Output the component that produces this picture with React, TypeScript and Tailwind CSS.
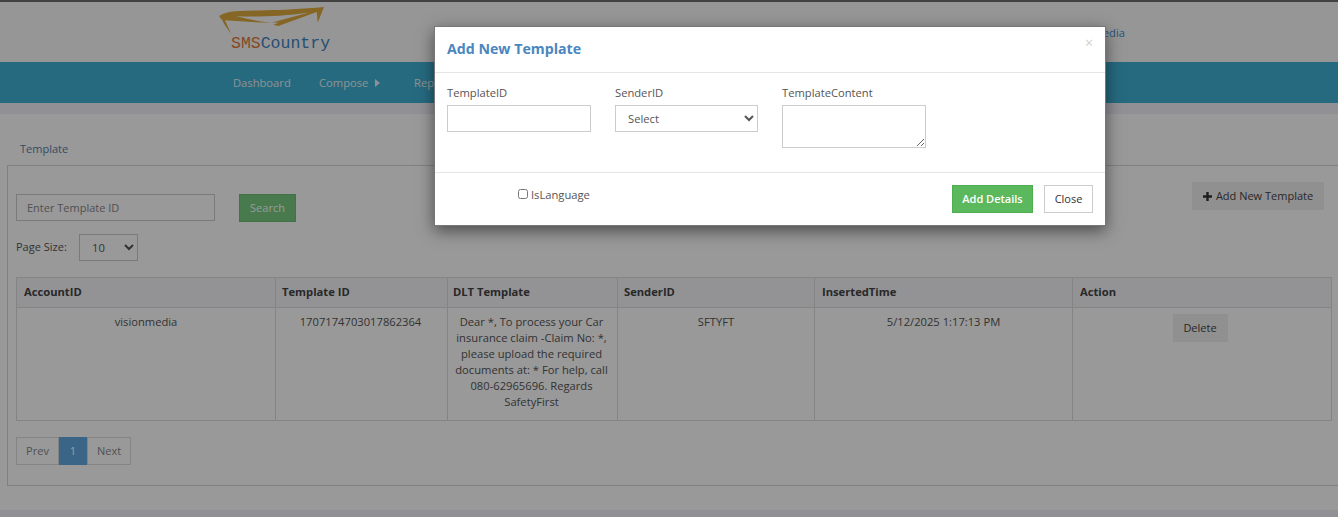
import React from "react";

const rows = [
  { w: "w-[259px]", p: "px-[7px]", c: "px-[6px]", h: "AccountID", v: "visionmedia" },
  { w: "w-[172px]", p: "px-[6px]", c: "pl-[5px] pr-[7px]", h: "Template ID", v: "1707174703017862364" },
  {
    w: "w-[170px]",
    p: "px-[5px]",
    c: "pl-[5px] pr-[7px]",
    h: "DLT Template",
    v: "Dear *, To process your Car insurance claim -Claim No: *, please upload the required documents at: * For help, call 080-62965696. Regards SafetyFirst",
  },
  { w: "w-[197px]", p: "px-[6px]", c: "px-[6px]", h: "SenderID", v: "SFTYFT" },
  { w: "w-[258px]", p: "px-[7px]", c: "px-[6px]", h: "InsertedTime", v: "5/12/2025 1:17:13 PM" },
];

function Logo() {
  return (
    <div className="relative w-[112px] h-[48px]">
      <svg className="absolute left-0 top-0" width="112" height="34" viewBox="0 0 112 34">
        <path
          d="M0 9 C5 6 10 5 16 4.3 C26 3.6 36 3.6 46 3.3 C56 3 64 3 72.7 2.3 C84 1.5 95 1 105 0 L98.7 15.7 L97.7 5 L59.3 19 L54.3 17.7 L60 15.5 C42 16 22 14.5 6 13.3 L12 26.7 C8 22 5 17 3.3 13.3 C2 12 1 10.5 0 9 Z M17 9 C30 10 60 10 90 5.5 L53 15.5 C40 14.5 28 12 17 9 Z"
          fill="#e0ab3c"
          fillRule="evenodd"
        />
      </svg>
      <div className="absolute left-[12px] top-[27px] whitespace-nowrap font-['Liberation_Mono',monospace] text-[16.5px] leading-[20px]">
        <span className="text-[#e07a3c]">SMS</span>
        <span className="text-[#3f83c0]">Country</span>
      </div>
    </div>
  );
}

function Page() {
  return (
    <div className="min-h-[517px] bg-white border-t-2 border-[#6e6e6e] text-[#555] flex flex-col">
      <header className="h-[60px] bg-[#fbfbfb] relative shrink-0 pl-[219px] pt-[5px]">
        <Logo />
        <div className="absolute right-[213px] top-[23px] text-[11.2px] text-[#428bca]">visionmedia</div>
      </header>
      <nav className="h-[41px] bg-[#40b1d5] flex items-center pl-[233px] pt-[2px] text-[11.2px] text-[#e9f3f7] shrink-0">
        <span className="w-[86px]">Dashboard</span>
        <span className="w-[95px] flex items-center">
          Compose
          <span className="ml-[7px] w-0 h-0 border-y-[4px] border-y-transparent border-l-[5px] border-l-[#e9f3f7]" />
        </span>
        <span>Reports</span>
      </nav>
      <div className="h-[11px] bg-[#f0f0f8] shrink-0" />
      <main className="pl-[7px] pt-[27px] flex-1">
        <div className="pl-[13px] text-[11px] leading-[16px] text-[#5a7ea6] h-[24px]">Template</div>
        <section className="border-y border-l border-[#d8d8d8] h-[321px] pl-[8px] pt-[16px]">
          <div className="flex items-start h-[40px] w-[1308px]">
            <input
              className="w-[199px] h-[27px] mt-[12px] border border-[#ccc] px-[10px] text-[11px] placeholder:text-[#888]"
              placeholder="Enter Template ID"
            />
            <button className="ml-[24px] mt-[12px] w-[57px] h-[28px] bg-[#78cc80] text-white text-[11px] border border-[#6cc074]">
              Search
            </button>
            <button className="ml-auto w-[132px] h-[28px] bg-[#f0f0f0] text-[11px] text-[#444] flex items-center justify-center gap-[4px]">
              <svg width="9" height="9" viewBox="0 0 9 9">
                <path d="M3.3 0h2.4v3.3H9v2.4H5.7V9H3.3V5.7H0V3.3h3.3z" fill="#333" />
              </svg>
              Add New Template
            </button>
          </div>
          <div className="flex items-center h-[27px] mt-[12px] text-[11px]">
            <span className="w-[63px] -mt-[1px]">Page Size:</span>
            <select className="w-[59px] h-[27px] border border-[#ccc] pl-[8px] text-[11.2px]" defaultValue="10">
              <option>10</option>
            </select>
          </div>
          <table className="mt-[16px] table-fixed border-collapse text-[11.2px] w-[1316px]">
            <thead>
              <tr className="h-[30px] bg-[#f5f5fa]">
                {rows.map((r) => (
                  <th key={r.h} className={`${r.w} ${r.p} border border-[#ddd] text-left font-bold text-[#444]`}>
                    {r.h}
                  </th>
                ))}
                <th className="border border-[#ddd] text-left px-[7px] font-bold text-[#444]">Action</th>
              </tr>
            </thead>
            <tbody>
              <tr className="h-[113px] align-top text-center">
                {rows.map((r) => (
                  <td key={r.h} className={`${r.c} border border-[#ddd] py-[6px] leading-[16px]`}>
                    {r.v}
                  </td>
                ))}
                <td className="border border-[#ddd] pt-[6px] pr-[4px]">
                  <button className="w-[55px] h-[28px] bg-[#f0f0f0] text-[11px] text-[#444]">Delete</button>
                </td>
              </tr>
            </tbody>
          </table>
          <div className="flex mt-[16px] h-[28px] text-[11px] text-[#888] w-[115px]">
            <span className="w-[43px] border border-[#ddd] flex items-center justify-center">Prev</span>
            <span className="w-[28px] bg-[#62a8e2] text-white flex items-center justify-center">1</span>
            <span className="w-[44px] border border-[#ddd] flex items-center justify-center">Next</span>
          </div>
        </section>
      </main>
      <div className="h-[7px] bg-[#f0f0f8] shrink-0 mt-[24px]" />
    </div>
  );
}

function Modal() {
  return (
    <div className="absolute inset-0 bg-black/40">
      <div className="absolute left-[434px] top-[26px] w-[672px] h-[200px] bg-white border border-[#777] shadow-[0_5px_15px_rgba(0,0,0,0.5)] flex flex-col text-[#555]">
        <div className="h-[46px] border-b border-[#e5e5e5] flex items-center px-[12px] justify-between shrink-0">
          <h4 className="text-[14.2px] font-bold text-[#4a86bf] -mt-[2px]">Add New Template</h4>
          <span className="text-[#cfcfcf] text-[14px] -mt-[14px]">×</span>
        </div>
        <div className="h-[99px] pl-[12px] pt-[12px] flex gap-[24px] shrink-0 text-[11.2px] leading-[16px]">
          <label className="flex flex-col w-[144px]">
            <span className="mb-[4px]">TemplateID</span>
            <input className="h-[27px] border border-[#ccc]" />
          </label>
          <label className="flex flex-col w-[143px]">
            <span className="mb-[4px]">SenderID</span>
            <select className="h-[27px] border border-[#ccc] pl-[8px] text-[11.2px]">
              <option>Select</option>
            </select>
          </label>
          <label className="flex flex-col w-[144px]">
            <span className="mb-[4px]">TemplateContent</span>
            <textarea className="h-[43px] border border-[#ccc]" />
          </label>
        </div>
        <div className="flex-1 border-t border-[#e5e5e5] flex items-start pr-[12px]">
          <label className="ml-[83px] mt-[14px] flex items-center text-[11.2px] leading-[16px]">
            <input type="checkbox" className="w-[10px] h-[10px] mr-[3px] -mt-[2px]" />
            IsLanguage
          </label>
          <button className="ml-auto mt-[12px] w-[81px] h-[28px] bg-[#5cb85c] border border-[#4cae4c] text-white text-[11px] font-semibold">
            Add Details
          </button>
          <button className="ml-[11px] mt-[12px] w-[49px] h-[28px] bg-white border border-[#ccc] text-[11px] text-[#333]">
            Close
          </button>
        </div>
      </div>
    </div>
  );
}

export default function App() {
  return (
    <div className="relative h-[517px] overflow-hidden font-['Open_Sans',sans-serif]">
      <Page />
      <Modal />
    </div>
  );
}
